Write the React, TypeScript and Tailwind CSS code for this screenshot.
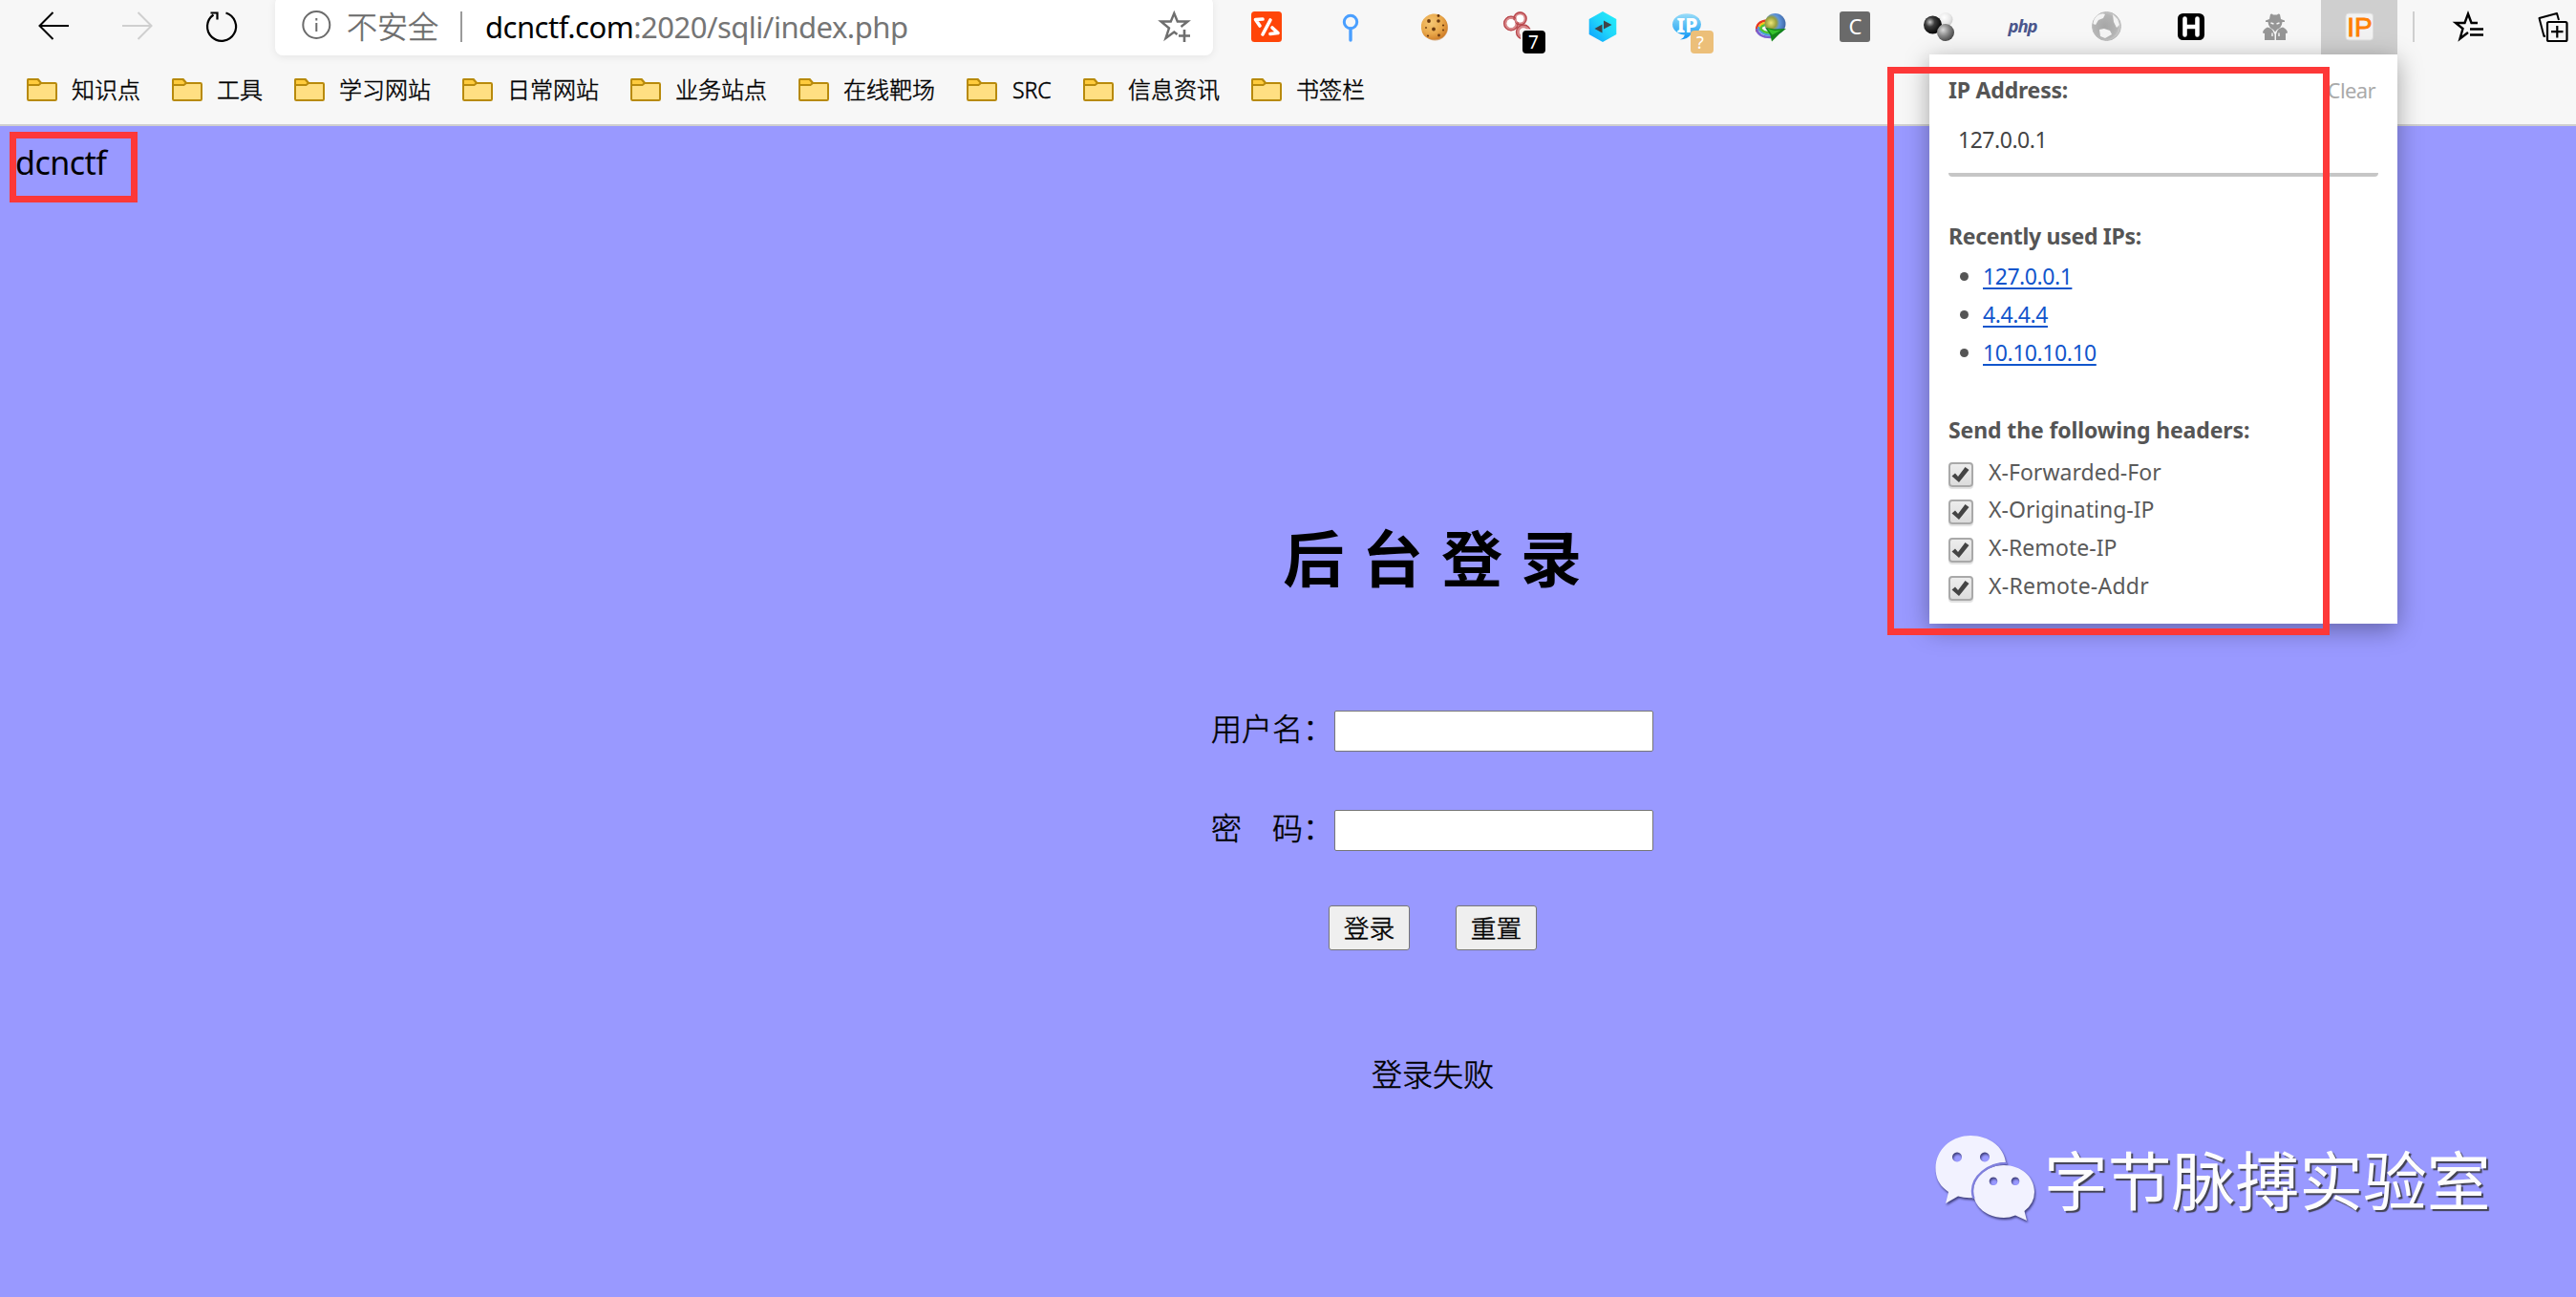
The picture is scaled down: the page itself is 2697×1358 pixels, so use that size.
import React from "react";

const UI = "font-['Noto_Sans','Noto_Sans_CJK_SC',sans-serif]";
const THIN = "font-light [-webkit-text-stroke:0.5px_currentColor]";

const bookmarks = ["知识点", "工具", "学习网站", "日常网站", "业务站点", "在线靶场", "SRC", "信息资讯", "书签栏"];
const recent = ["127.0.0.1", "4.4.4.4", "10.10.10.10"];
const headers = [
  { name: "X-Forwarded-For", spacing: "tracking-[0.030px]" },
  { name: "X-Originating-IP", spacing: "tracking-[0.020px]" },
  { name: "X-Remote-IP", spacing: "tracking-[0.050px]" },
  { name: "X-Remote-Addr", spacing: "tracking-[0.250px]" },
];

function Icon({ children, className = "" }: { children: React.ReactNode; className?: string }) {
  return (
    <svg viewBox="0 0 32 32" className={`h-8 w-8 shrink-0 overflow-visible ${className}`} fill="none">
      {children}
    </svg>
  );
}

function Folder() {
  return (
    <svg viewBox="0 0 32 24" className="h-6 w-8 shrink-0" fill="none" stroke="#b88a0c" strokeWidth="2" strokeLinejoin="round">
      <path d="M1 22V2.200Q1 1 2.200 1H11.500L15 5H29.800Q31 5 31 6.200V21.800Q31 23 29.800 23H2.200Q1 23 1 21.800Z" fill="#ffdf82" />
      <path d="M1 7V2.200Q1 1 2.200 1H11.500L15 5L12.500 7Z" fill="#ffcb3d" />
    </svg>
  );
}

const extensionIcons = [
  <Icon key="switch">
    <rect width="32" height="32" rx="3.500" fill="#ff4508" />
    <path d="M12 8L4.500 8.500L9 15M20 9L12 24M22 17L28 22.500L20 23.500" stroke="#fff" strokeWidth="3.600" strokeLinecap="round" strokeLinejoin="round" />
  </Icon>,
  <Icon key="pin">
    <circle cx="16" cy="11" r="6.700" stroke="#4a9fff" strokeWidth="3" />
    <path d="M16 18V30" stroke="#4a9fff" strokeWidth="3.400" strokeLinecap="round" />
  </Icon>,
  <Icon key="cookie">
    <circle cx="16.500" cy="17" r="13.500" fill="#b96a1c" opacity=".55" />
    <path d="M14 2.500Q20 2 23 4.500Q29 8 29.500 15Q30 23 24 27.500Q17 31 10 28.500Q3 26 2 18Q1 10 7 5.500Q10 3 14 2.500Z" fill="url(#cookie)" />
    <g fill="#6b3a10">
      <circle cx="10" cy="10" r="1.900" /><circle cx="20" cy="10" r="1.800" /><circle cx="15" cy="18.500" r="1.900" />
      <circle cx="25" cy="14.500" r="1.100" /><circle cx="20.500" cy="25" r="1.400" /><circle cx="9" cy="25.500" r="1.100" />
      <circle cx="7" cy="17" r=".9" /><circle cx="20" cy="4.500" r="1.400" /><circle cx="25" cy="19.500" r="1" />
    </g>
  </Icon>,
  <div key="circles" className="relative">
    <Icon>
      <g fill="#fff" stroke="#d98a8c" strokeWidth="3.600">
        <circle cx="21" cy="21.500" r="6" /><circle cx="17.500" cy="7.500" r="5.500" /><circle cx="8" cy="12.500" r="6" />
      </g>
      <g stroke="#b8474c" strokeWidth="1.300">
        <circle cx="21" cy="21.500" r="7.500" /><circle cx="17.500" cy="7.500" r="6.500" /><circle cx="8" cy="12.500" r="7.300" />
      </g>
      <circle cx="17.500" cy="7.500" r="4" fill="#fff" /><circle cx="8" cy="12.500" r="4.500" fill="#fff" />
      <path d="M18 31V21.500Q18 18.500 21 18.500H31V31Z" fill="#f7f7f7" />
    </Icon>
    <span className="absolute left-5 top-5 flex h-6 w-6 items-center justify-center rounded bg-black pr-px text-[19px] leading-none text-white">7</span>
  </div>,
  <Icon key="hex">
    <path d="M16 0L30.300 8V24L16 32L1.700 24V8Z" fill="url(#hex)" />
    <path d="M7.500 18L15.500 13.500V22.500ZM25.500 14L17 9.500V18.500Z" fill="#3f4347" />
  </Icon>,
  <div key="ip-lookup" className="relative">
    <Icon>
      <path d="M9 22L14 24Q13 28 9 29.500Q17 29.500 21 23Z" fill="#1f9af5" />
      <ellipse cx="16" cy="13.500" rx="15" ry="11.300" fill="url(#bubble)" />
      <text x="16.500" y="21.500" textAnchor="middle" fontSize="21" fontWeight="800" fill="#fff" fontFamily="Noto Sans">IP</text>
    </Icon>
    <span className="absolute left-5 top-5 flex h-6 w-6 items-center justify-center rounded bg-[#ecbf79] pr-1 text-[18px] leading-none text-white">?</span>
  </div>,
  <Icon key="idm">
    <path d="M1.200 21Q0 10 13 9.500" stroke="#e8361f" strokeWidth="2.400" />
    <path d="M3.400 20.500Q3 12 13 11.800" stroke="#f5c518" strokeWidth="2.400" />
    <path d="M1 18Q2.500 27 16 27" stroke="#7a5fd0" strokeWidth="2.400" />
    <path d="M3 16Q4.500 24.500 16 24.800" stroke="#4b9be0" strokeWidth="2.400" />
    <path d="M5.500 19.500Q5 14 12 14M5 17Q7 22.300 16 22.500" stroke="#4ec433" strokeWidth="2.400" />
    <circle cx="20.500" cy="13" r="11" fill="url(#globe)" />
    <path d="M10.500 17L20 18.500L32 18L25 23.500L17 31.500L15.500 25Z" fill="#14851a" />
    <path d="M12.500 18L20 20L27 19.500L17.500 24.500Z" fill="#35c22c" />
  </Icon>,
  <Icon key="c">
    <rect width="32" height="32" rx="3" fill="#6a6a6a" />
    <text x="16.500" y="23.500" textAnchor="middle" fontSize="22" fill="#fff" fontFamily="Noto Sans">C</text>
  </Icon>,
  <Icon key="spheres">
    <circle cx="23" cy="8.500" r="7.500" fill="url(#sphereLight)" />
    <circle cx="9.500" cy="14" r="9.500" fill="url(#sphereDark)" />
    <circle cx="23" cy="22" r="9" fill="url(#sphereMid)" />
  </Icon>,
  <Icon key="php">
    <text x="16" y="21.500" textAnchor="middle" fontSize="18.500" fontWeight="700" fontStyle="italic" fill="#4b568c" fontFamily="Open Sans" textLength="31">php</text>
  </Icon>,
  <Icon key="world">
    <circle cx="15.500" cy="15.500" r="15" fill="url(#gray)" stroke="#b9b9b9" strokeWidth="1" />
    <path d="M6 4Q11 1 14 3L12 7L7 9L4 14L1.500 13Q2 7 6 4ZM8 19L13 18L19 20L21 24L14 28L9 26ZM22 3L27 8L29 14L26 17L23 11Z" fill="#f4f4f4" />
  </Icon>,
  <Icon key="h">
    <rect x="2" y="2" width="28" height="28" rx="5.500" fill="#000" />
    <path d="M9.500 7.500V24.500M22.500 7.500V24.500M9.500 16H22.500" stroke="#fff" strokeWidth="4.600" strokeLinecap="round" />
  </Icon>,
  <Icon key="spy">
    <g fill="#969696">
      <path d="M10 8L11 3Q12.500 2 14 3.500H18Q19.500 2 21 3L22 8L26 9.500V11H23.500Q23 18 16 19.500Q9 18 8.500 11H6V9.500Z" />
      <path d="M5 30V23L3 22.500Q3 19 8 16.500Q13 17.500 14 21L15.500 24V30ZM27 30V23L29 22.500Q29 19 24 16.500Q19 17.500 18 21L17 24V30Z" />
      <path d="M14 19L16 21.500L18 19V17H14Z" />
    </g>
    <path d="M11.500 12L14.500 13M20.500 12L17.500 13M13 22.500V26M20 22.500V26" stroke="#f7f7f7" strokeWidth="1.400" />
  </Icon>,
];

function CheckRow({ name, spacing }: { name: string; spacing: string }) {
  return (
    <label className="flex h-[39.670px] items-center">
      <span className="relative top-[3px] flex h-[26px] w-[26px] items-center justify-center rounded-[4px] border-2 border-[#a9a9a9] bg-linear-to-b from-[#ededed] to-[#dcdcdc] shadow-[0_2px_1px_rgba(0,0,0,0.12)]">
        <svg viewBox="0 0 22 22" className="h-[22px] w-[22px]">
          <path d="M1.500 12.500L5 9.500L8 13L15.500 3L19.500 6L9 19Z" fill="#444" />
        </svg>
      </span>
      <span className={`ml-4 pt-px text-[23px] leading-[39px] text-[#5a5a5a] ${spacing}`}>{name}</span>
    </label>
  );
}

export default function App() {
  return (
    <div className={`relative h-[1358px] w-[2697px] overflow-hidden bg-[#9999ff] text-black ${UI}`}>
      <svg className="absolute h-0 w-0">
        <defs>
          <radialGradient id="cookie" cx=".38" cy=".35" r=".7"><stop offset="0" stopColor="#f5c673" /><stop offset=".6" stopColor="#e9a84b" /><stop offset="1" stopColor="#cf7c26" /></radialGradient>
          <linearGradient id="hex" x1="1" y1="0" x2="0" y2="1"><stop offset="0" stopColor="#22f0f8" /><stop offset=".5" stopColor="#20d4fa" /><stop offset="1" stopColor="#0a9bff" /></linearGradient>
          <linearGradient id="bubble" x1="0" y1="0" x2="0" y2="1"><stop offset="0" stopColor="#9bdcf8" /><stop offset=".5" stopColor="#5cc0f5" /><stop offset="1" stopColor="#2aa5f5" /></linearGradient>
          <radialGradient id="globe" cx=".3" cy=".45" r=".75"><stop offset="0" stopColor="#eee878" /><stop offset=".35" stopColor="#98a03c" /><stop offset=".55" stopColor="#5f96dc" /><stop offset="1" stopColor="#3a5f9c" /></radialGradient>
          <radialGradient id="sphereLight" cx=".4" cy=".35" r=".7"><stop offset="0" stopColor="#fff" /><stop offset=".6" stopColor="#e8e8e8" /><stop offset="1" stopColor="#c8c8c8" /></radialGradient>
          <radialGradient id="sphereDark" cx=".35" cy=".35" r=".65"><stop offset="0" stopColor="#c8c8c8" /><stop offset=".4" stopColor="#3c3c3c" /><stop offset="1" stopColor="#050505" /></radialGradient>
          <radialGradient id="sphereMid" cx=".35" cy=".35" r=".7"><stop offset="0" stopColor="#dadada" /><stop offset=".5" stopColor="#8a8a8a" /><stop offset="1" stopColor="#454545" /></radialGradient>
          <radialGradient id="gray" cx=".45" cy=".5" r=".6"><stop offset="0" stopColor="#a6a6a6" /><stop offset=".7" stopColor="#b5b5b5" /><stop offset="1" stopColor="#dcdcdc" /></radialGradient>
        </defs>
      </svg>

      <header className="h-[132px] border-b-2 border-[#cfcfcf] bg-[#f7f7f7]">
        <div className="flex h-[58px] pl-10">
          <nav className="flex h-[56px] items-center gap-14">
            <Icon>
              <path d="M32 15H2M15.500 1L1.500 15L15.500 29" stroke="#000" strokeWidth="2" />
            </Icon>
            <Icon>
              <path d="M0 15H30M16.500 1L30.500 15L16.500 29" stroke="#cfcfcf" strokeWidth="2" />
            </Icon>
            <Icon>
              <path d="M20.500 1.500A15 15 0 1 1 7.500 3.500M4.500 1.500H11.500V8.500" stroke="#000" strokeWidth="2.200" />
            </Icon>
          </nav>
          <div className="-mt-1 ml-10 flex h-[62px] w-[982px] shrink-0 items-center rounded-lg bg-white pl-7 pr-6 pt-0.5 shadow-[0_2px_8px_rgba(0,0,0,0.07)]">
            <Icon>
              <circle cx="15.300" cy="14" r="14" stroke="#6b6b6b" strokeWidth="2" />
              <path d="M15.300 12V21M15.300 7V9.500" stroke="#6b6b6b" strokeWidth="2" />
            </Icon>
            <span className={`ml-[15px] text-[32px] leading-none text-[#6b6b6b] ${THIN}`}>不安全</span>
            <span className="ml-[23px] h-8 w-0.5 bg-[#9a9a9a]" />
            <span className="ml-6 whitespace-nowrap text-[31px] leading-none tracking-[-0.500px] text-[#757575]">
              <span className="text-black">dcnctf.com</span>:2020/sqli/index.php
            </span>
            <Icon className="ml-auto">
              <path d="M22.500 16L29.500 10.500H18.800L15.300 2L11.800 10.500H1.500L10 17.500L6.500 28L15.300 21.500L18.500 24" stroke="#6e6e6e" strokeWidth="2.400" />
              <path d="M26 19V32M20 25.500H32" stroke="#6e6e6e" strokeWidth="2.600" />
            </Icon>
          </div>
          <div className="ml-3 flex h-[57px]">
            {extensionIcons.map((icon, i) => (
              <div key={i} className="flex w-[88px] items-center justify-center pb-px">
                {icon}
              </div>
            ))}
            <div className="mx-1 flex w-20 items-center justify-center bg-[#cfcfcf] pb-px">
              <Icon>
                <rect x="2" y="2" width="28.500" height="28" rx="3" fill="#f2f2f2" stroke="#ddd" />
                <text x="16.500" y="26" textAnchor="middle" fontSize="28" fill="#ff7f00" stroke="#ff7f00" strokeWidth=".8" fontFamily="Liberation Sans">IP</text>
              </Icon>
            </div>
          </div>
          <div className="flex h-[56px] items-center">
            <span className="ml-[12px] h-8 w-0.5 bg-[#cfcfcf]" />
            <Icon className="ml-[40px]">
              <path d="M26 12H19.500L16 2.500L12.500 12H3L10.500 18L7.500 28.500L16 22" stroke="#000" strokeWidth="2.400" />
              <path d="M18 18.500H32M18 24.500H32" stroke="#000" strokeWidth="2.400" />
            </Icon>
            <Icon className="ml-[57px]">
              <path d="M8 25.500L6.500 26L1.500 7L20 2L22 9" stroke="#000" strokeWidth="2" strokeLinejoin="round" />
              <rect x="10" y="11" width="20.500" height="20" rx="1.500" stroke="#000" strokeWidth="2.200" />
              <path d="M20.300 15V27.500M14 21.200H26.500" stroke="#000" strokeWidth="2.200" />
            </Icon>
          </div>
        </div>
        <div className="flex h-[72px] items-center gap-8 pl-7">
          {bookmarks.map((label) => (
            <div key={label} className={`flex items-center gap-4 ${THIN}`}>
              <Folder />
              <span className={label === "SRC" ? "w-[42px] text-[23px] leading-8" : "relative -left-px text-2xl leading-8"}>{label}</span>
            </div>
          ))}
        </div>
      </header>

      <main className="w-[3000px]">
        <p className="h-[62px] pl-4 pt-[15px] text-[34px] leading-[46px] tracking-[-0.500px]">dcnctf</p>
        <div className="flex flex-col items-center">
          <h1 className="mt-[351px] pl-[18px] text-[64px] font-bold leading-[80px] tracking-[18.900px]">后台登录</h1>
          <form className="flex flex-col items-center">
            <div className={`mt-[119px] flex h-[43px] items-center text-[32px] ${THIN}`}>
              <span className="relative -top-[3px] right-px w-32 leading-none">用户名：</span>
              <input className="h-[43px] w-[334px] rounded-[2px] border border-[#767676] bg-white" />
            </div>
            <div className={`mt-[61px] flex h-[43px] items-center text-[32px] ${THIN}`}>
              <span className="relative -top-[3px] right-px w-32 leading-none">密　码：</span>
              <input className="h-[43px] w-[334px] rounded-[2px] border border-[#767676] bg-white" />
            </div>
            <div className={`mt-[57px] flex gap-12 ${THIN}`}>
              <button type="button" className="h-[47px] w-[85px] rounded-[3px] border border-[#767676] bg-[#efefef] pt-0.5 text-[26.670px] leading-none">登录</button>
              <button type="button" className="h-[47px] w-[85px] rounded-[3px] border border-[#767676] bg-[#efefef] pt-0.5 text-[26.670px] leading-none">重置</button>
            </div>
          </form>
          <p className={`mt-[110px] text-[32px] leading-10 ${THIN}`}>登录失败</p>
        </div>
      </main>

      <div className="absolute left-[10px] top-[138px] h-[74px] w-[134px] border-[7px] border-[#fd3838]" />

      <section className="absolute left-[2020px] top-[57px] h-[596px] w-[490px] bg-white px-5 pt-[17px] text-[#555] shadow-[0_6px_24px_rgba(0,0,0,0.35)]">
        <div className="flex h-10 items-center justify-between pr-[3px]">
          <h2 className="text-[23px] font-bold tracking-[-0.200px]">IP Address:</h2>
          <button type="button" className="text-[22px] leading-10 tracking-[-0.600px] text-[#aaa]">Clear</button>
        </div>
        <div className="h-[71px] rounded-[4px] border-b-4 border-[#c6c6c6] pl-2.5 text-[23px] leading-[64px] tracking-[-0.480px] text-[#444]">127.0.0.1</div>
        <h2 className="mt-[42px] text-[23px] font-bold leading-10 tracking-[-0.300px]">Recently used IPs:</h2>
        <ul className="mt-0.5">
          {recent.map((ip) => (
            <li key={ip} className="flex h-10 items-center pl-3 text-[23px] tracking-[-0.450px]">
              <span className="mr-[15px] h-[9px] w-[9px] rounded-full bg-[#555]" />
              <a className="text-[#1155cc] underline decoration-2 underline-offset-[3px]">{ip}</a>
            </li>
          ))}
        </ul>
        <h2 className="mt-[41px] whitespace-nowrap text-[23px] font-bold leading-10 tracking-[-0.120px]">Send the following headers:</h2>
        <div className="mt-1">
          {headers.map((h) => (
            <CheckRow key={h.name} {...h} />
          ))}
        </div>
      </section>
      <div className="absolute left-[1976px] top-[70px] h-[595px] w-[463px] border-[7px] border-[#fd3838]" />

      <div className="absolute left-[2024px] top-[1186px] flex items-center">
        <svg viewBox="0 0 112 96" className="h-24 w-28 overflow-visible drop-shadow-[1px_2px_1px_rgba(40,40,90,0.8)]">
          <path fillRule="evenodd" fill="#f2f2ff" d="M39 3C59 3 74 15 76 31C57 32 42 45 42 60Q42 65 43.500 68Q34 69 26 66.500L13 74L16 62C7 56 2.500 48 2.500 37C2.500 18 19 3 39 3ZM25 20.500a5 5 0 1 0 .01 0ZM54 20.500a5 5 0 1 0 .01 0Z" />
          <path fillRule="evenodd" fill="#f2f2ff" d="M74 34C92 34 106 46 106 62Q106 74 95.500 82L98 92L86 86.500Q80 89 74 89C56 89 42 77 42 62C42 46 56 34 74 34ZM63 46.500a4.300 4.300 0 1 0 .01 0ZM86 46.500a4.300 4.300 0 1 0 .01 0Z" />
          <path d="M77 32C57 32 41 46 41 61Q41 65 42.500 69" fill="none" stroke="#8080dd" strokeWidth="2.500" />
        </svg>
        <span className="relative top-[3px] ml-1 text-[66.800px] leading-[96px] text-[#fdfdfd] [text-shadow:2px_2px_1px_rgba(50,50,50,0.85)]">字节脉搏实验室</span>
      </div>
    </div>
  );
}
